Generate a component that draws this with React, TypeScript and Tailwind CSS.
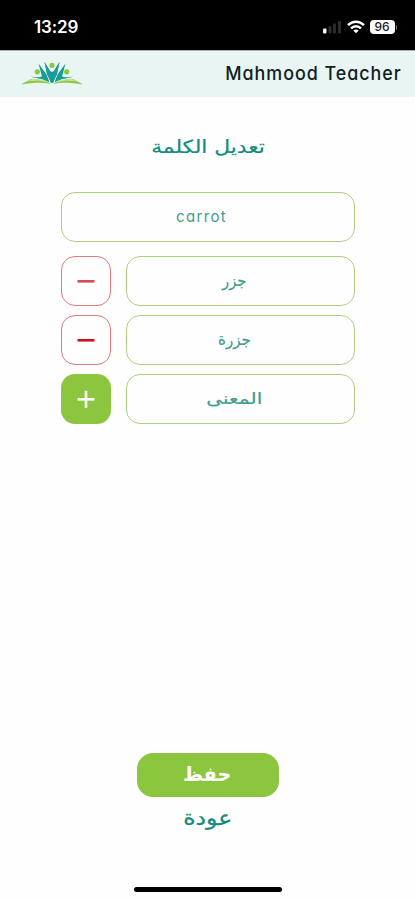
import React from "react";

const meanings = [
  { text: "جزر", width: "scale-x-[0.92]", action: "remove", color: "text-[#d94a55]" },
  { text: "جزرة", width: "scale-x-[0.94]", action: "remove", color: "text-[#c4161c]" },
  { text: "المعنى", width: "scale-x-[1.26]", action: "add", color: "text-white" },
];

function StatusBar() {
  return (
    <div className="flex h-[50px] shrink-0 items-start justify-between bg-black pr-[18px] pl-[34px] text-white">
      <span className="mt-[15px] font-[Inter] text-[17px] leading-6 font-semibold tracking-[-0.1px]">
        13:29
      </span>
      <div className="mt-5 flex items-center">
        <svg className="-ml-3 mr-px" width="20" height="14" viewBox="0 0 20 14">
          <rect x="0" y="8.5" width="3.5" height="5" rx="1" fill="#fff" />
          <rect x="5.5" y="6" width="3" height="7.5" rx="1" fill="#2c2c2c" />
          <rect x="10" y="3.5" width="3" height="10" rx="1" fill="#2c2c2c" />
          <rect x="15" y="1" width="3" height="12.5" rx="1" fill="#2c2c2c" />
        </svg>
        <svg className="mr-[5px] ml-[3px]" width="18" height="14" viewBox="0 0 18 14" fill="none" stroke="#fff" strokeWidth="2.4">
          <path d="M1 5.2C5.5 0.6 12.5 0.6 17 5.2" />
          <path d="M4 8.4C6.8 5.5 11.2 5.5 14 8.4" />
          <path d="M6.3 10.5C7.8 9 10.2 9 11.7 10.5L9 13.3Z" fill="#fff" stroke="none" />
        </svg>
        <div className="flex h-[14px] w-[25px] items-center justify-center rounded bg-white font-[Inter] text-[12px] leading-none font-medium text-[#222]">
          96
        </div>
        <div className="ml-px h-[5px] w-[1.5px] rounded-r bg-[#777]" />
      </div>
    </div>
  );
}

function Logo() {
  return (
    <svg width="62" height="24" viewBox="0 0 62 24">
      <path d="M0 22.5L10 17C17 17 25 18.5 30 22.3C21 20 13 20.5 0 22.5Z" fill="#8cc63f" />
      <path d="M62 22.5L52 17C45 17 37 18.5 32 22.3C41 20 49 20.5 62 22.5Z" fill="#8cc63f" />
      <path d="M6 19.5L11 17C18 17 24 18 28 20.5C20 18.5 13 18.5 6 19.5Z" fill="#c9e29a" />
      <path d="M56 19.5L51 17C44 17 38 18 34 20.5C42 18.5 49 18.5 56 19.5Z" fill="#c9e29a" />
      <path d="M9 14.5C14 15.5 18 15.5 21 14.5L17.5 1.5L25.5 12.5L28.5 20.5C22 16.5 16 16.5 9 14.5Z" fill="#159c91" />
      <path d="M53 14.5C48 15.5 44 15.5 41 14.5L44.5 1.5L36.5 12.5L33.5 20.5C40 16.5 46 16.5 53 14.5Z" fill="#159c91" />
      <path d="M23.5 0L29 9L31 10L33 9L38.5 0L36 12L32 21H30L26 12Z" fill="#159c91" />
      <path d="M23.5 0L29 9L30 20L26 12Z M38.5 0L33 9L32 20L36 12Z" fill="#23999f" />
      <circle cx="31" cy="3.3" r="2.6" fill="#8cc63f" />
      <circle cx="16.3" cy="9.8" r="2.6" fill="#8cc63f" />
      <circle cx="45.7" cy="9.8" r="2.6" fill="#8cc63f" />
    </svg>
  );
}

function ActionButton({ action, color }: any) {
  return (
    <button
      className={`flex h-[50px] w-[50px] items-center justify-center rounded-[14px] pl-px ${color} ${
        action === "add" ? "bg-[#8cc63f]" : "border border-[#e27880]"
      }`}
    >
      <svg width="18" height="18" viewBox="0 0 18 18" stroke="currentColor" strokeWidth="2.6">
        <path d="M0.5 9.3H17.5" />
        {action === "add" && <path d="M9 0.8V17.8" />}
      </svg>
    </button>
  );
}

export default function App() {
  return (
    <div className="flex h-[900px] w-[415px] flex-col overflow-hidden bg-[#fefefe] font-['DejaVu_Sans',sans-serif] text-[#168b7c]">
      <StatusBar />
      <header className="flex h-[47px] shrink-0 items-center justify-between border-t border-[#aab3b1] bg-[#e9f5f3] pr-[13px] pl-[21px]">
        <Logo />
        <h1 className="origin-right scale-x-[0.94] font-[Inter] text-[19px] font-medium tracking-[1.05px] text-[#10201f] [font-feature-settings:'cv11']">
          Mahmood Teacher
        </h1>
      </header>

      <main className="flex flex-1 flex-col items-center">
        <h2 className="mt-[35px] h-[30px] text-[18px] leading-[30px]" dir="rtl">
          <span className="inline-block scale-x-[1.21] [-webkit-text-stroke:0.2px_#168b7c]">تعديل الكلمة</span>
        </h2>

        <div className="mt-[30px] flex w-[294px] flex-col gap-[9px]">
          <div className="mb-[5px] flex h-[50px] items-center justify-center rounded-[14px] border border-[#adcf82] pr-3 font-[Inter] text-[15px] tracking-[1.35px] text-[#439c8c] [font-feature-settings:'cv11']">
            carrot
          </div>
          {meanings.map((item) => (
            <div key={item.text} className="flex justify-between">
              <ActionButton action={item.action} color={item.color} />
              <div
                dir="rtl"
                className="flex h-[50px] w-[229px] items-center justify-center rounded-[14px] border border-[#adcf82] pr-[11px] text-[16px] text-[#439c8c]"
              >
                <span className={`inline-block [-webkit-text-stroke:0.2px_#439c8c] ${item.width}`}>
                  {item.text}
                </span>
              </div>
            </div>
          ))}
        </div>

        <button className="mt-auto flex h-[44px] w-[142px] items-center justify-center rounded-[16px] bg-[#8cc63f] pb-0.5 text-[20px] font-bold text-white">
          <span className="inline-block scale-x-[0.96]">حفظ</span>
        </button>
        <button className="mt-[5px] h-[32px] text-[20px] leading-8">
          <span className="inline-block scale-x-[1.18] [-webkit-text-stroke:0.3px_#168b7c]">عودة</span>
        </button>
        <div className="mt-[53px] mb-2 h-[5px] w-[148px] rounded-full bg-black" />
      </main>
    </div>
  );
}
